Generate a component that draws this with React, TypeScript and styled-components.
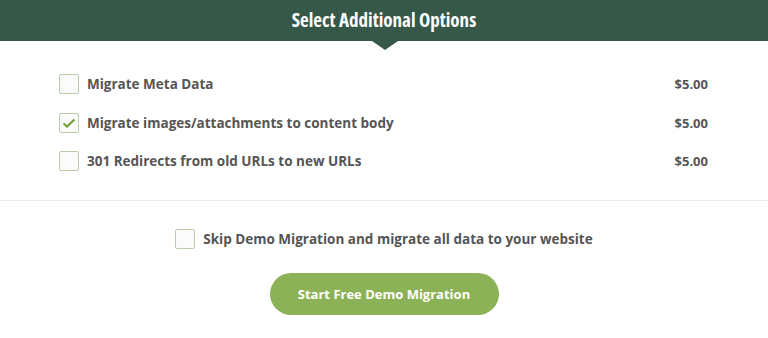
import React, { useState } from "react";
import styled, { createGlobalStyle } from "styled-components";

const Global = createGlobalStyle`
    html, body { margin: 0; padding: 0; background: #fff; }
    body { font-family: "Open Sans", "Liberation Sans", sans-serif; }
`;

const Panel = styled.div`
    width: 768px;
    height: 338px;
    background: #fff;
    overflow: hidden;
`;

const Header = styled.div`
    position: relative;
    height: 41px;
    background: #365849;
    display: flex;
    align-items: center;
    justify-content: center;

    &::after {
        content: "";
        position: absolute;
        left: 372px;
        top: 41px;
        border-left: 13px solid transparent;
        border-right: 13px solid transparent;
        border-top: 9px solid #365849;
    }
`;

const Title = styled.h2`
    margin: 0 0 1px;
    color: #fff;
    font-family: "Liberation Sans Narrow", "Open Sans", sans-serif;
    font-stretch: condensed;
    font-weight: 700;
    font-size: 19px;
`;

const Options = styled.div`
    display: flex;
    flex-direction: column;
    gap: 18.5px;
    padding: 33px 60px 29px 59px;
    border-bottom: 1px solid #ececec;
`;

const Row = styled.label`
    display: flex;
    align-items: center;
    gap: 8px;
    height: 20px;
    cursor: pointer;
`;

const Box = styled.span<{ $checked?: boolean }>`
    flex: none;
    box-sizing: border-box;
    width: 20px;
    height: 20px;
    border: 1.5px solid #b9cda7;
    border-radius: 2px;
    background: #fbfbfb;
    display: flex;
    align-items: center;
    justify-content: center;
`;

const Label = styled.span`
    flex: 1;
    color: #555;
    font-weight: 700;
    font-size: 13.5px;
`;

const Price = styled.span`
    color: #555;
    font-weight: 700;
    font-size: 13px;
`;

const Footer = styled.div`
    display: flex;
    flex-direction: column;
    align-items: center;
    padding-top: 28px;
    gap: 24px;
`;

const StartButton = styled.button`
    width: 229px;
    height: 42px;
    border: none;
    border-radius: 21px;
    background: #8cb257;
    color: #fff;
    font-family: "Open Sans", sans-serif;
    font-weight: 700;
    font-size: 13px;
    cursor: pointer;
`;

const Check = () => (
    <svg width="14" height="12" viewBox="0 0 14 12">
        <path d="M1.5 6.5 L5 9.5 L12.5 2.5" fill="none" stroke="#6f9e3c" strokeWidth="2.2" />
    </svg>
);

const options = [
    { label: "Migrate Meta Data", price: "$5.00", checked: false },
    { label: "Migrate images/attachments to content body", price: "$5.00", checked: true },
    { label: "301 Redirects from old URLs to new URLs", price: "$5.00", checked: false },
];

export default function App() {
    const [checked, setChecked] = useState(options.map((o) => o.checked));
    const [skip, setSkip] = useState(false);

    return (
        <Panel>
            <Global />
            <Header>
                <Title>Select Additional Options</Title>
            </Header>
            <Options>
                {options.map((o, i) => (
                    <Row key={o.label} onClick={() => setChecked(checked.map((c, j) => (j === i ? !c : c)))}>
                        <Box $checked={checked[i]}>{checked[i] && <Check />}</Box>
                        <Label>{o.label}</Label>
                        <Price>{o.price}</Price>
                    </Row>
                ))}
            </Options>
            <Footer>
                <Row onClick={() => setSkip(!skip)}>
                    <Box $checked={skip}>{skip && <Check />}</Box>
                    <Label>Skip Demo Migration and migrate all data to your website</Label>
                </Row>
                <StartButton>Start Free Demo Migration</StartButton>
            </Footer>
        </Panel>
    );
}
